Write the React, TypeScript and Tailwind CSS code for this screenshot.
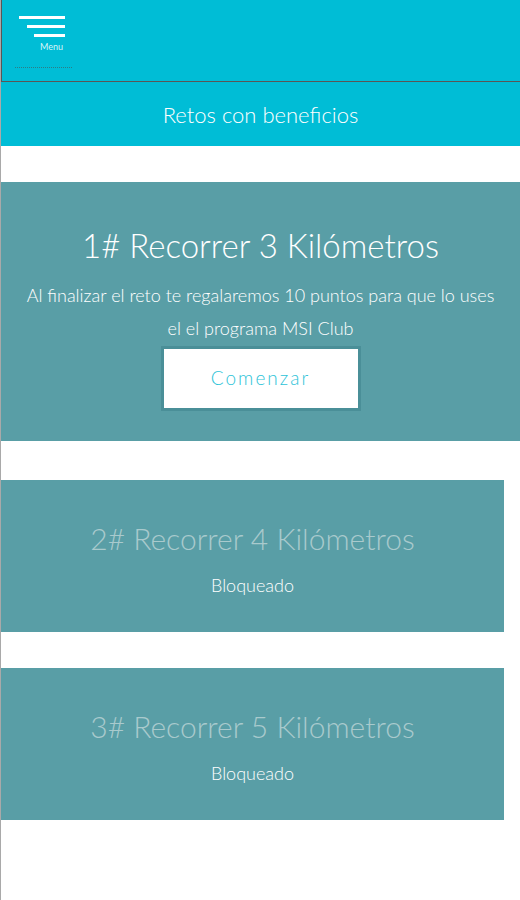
import React from 'react'

const FONT = { fontFamily: 'Lato, "Open Sans", sans-serif' }

type Reto = { n: number; km: number; open: boolean; gap: string }

const RETOS: Reto[] = [
  { n: 1, km: 3, open: true, gap: 'mt-[36px]' },
  { n: 2, km: 4, open: false, gap: 'mt-[39px]' },
  { n: 3, km: 5, open: false, gap: 'mt-[36px]' },
]

function MenuButton() {
  return (
    <div className="ml-[17px] pt-[16px] w-[46px] flex flex-col items-end">
      <span className="block h-[3px] w-[46px] bg-white" />
      <span className="block h-[3px] w-[38px] bg-white mt-[6px]" />
      <span className="block h-[3px] w-[31px] bg-white mt-[6px]" />
      <span className="block text-[9px] leading-none text-[#d8f4f8] mt-[5px] mr-[2px]">Menu</span>
      <span className="block w-[57px] mt-[16px] border-t border-dotted border-[#2c7d86] self-start -ml-[4px]" />
    </div>
  )
}

function RetoCard({ reto }: { reto: Reto }) {
  if (reto.open) {
    return (
      <section className={`${reto.gap} bg-[#599ea6] h-[259px] flex flex-col items-center pt-[42px] text-white`}>
        <h2 className="text-[33px] font-light leading-[42px]">{reto.n}# Recorrer {reto.km} Kilómetros</h2>
        <p className="text-[18px] font-light leading-[33px] text-center mt-[13px] px-[22px]">
          Al finalizar el reto te regalaremos 10 puntos para que lo uses el el programa MSI Club
        </p>
        <button className="mt-[1px] w-[200px] h-[65px] bg-white border-[3px] border-[#4a8f98] text-[#2ec3d8] text-[19px] font-light tracking-[2px]">
          Comenzar
        </button>
      </section>
    )
  }
  return (
    <section className={`${reto.gap} bg-[#599ea6] h-[152px] mr-[16px] flex flex-col items-center pt-[37px]`}>
      <h2 className="text-[30px] font-light leading-[42px] text-[#a9cacd]">{reto.n}# Recorrer {reto.km} Kilómetros</h2>
      <p className="text-[18px] font-light text-white mt-[13px]">Bloqueado</p>
    </section>
  )
}

export default function App() {
  return (
    <div className="min-h-[900px] bg-white border-l border-[#a9a9a9]" style={FONT}>
      <header className="h-[82px] bg-[#00bdd6] border-b border-l border-[#5b5656]">
        <MenuButton />
      </header>
      <div className="h-[64px] bg-[#00bdd6] flex items-center justify-center">
        <h1 className="text-[22px] font-light text-white">Retos con beneficios</h1>
      </div>
      <main className="flex flex-col">
        {RETOS.map((r) => (
          <RetoCard key={r.n} reto={r} />
        ))}
      </main>
    </div>
  )
}
